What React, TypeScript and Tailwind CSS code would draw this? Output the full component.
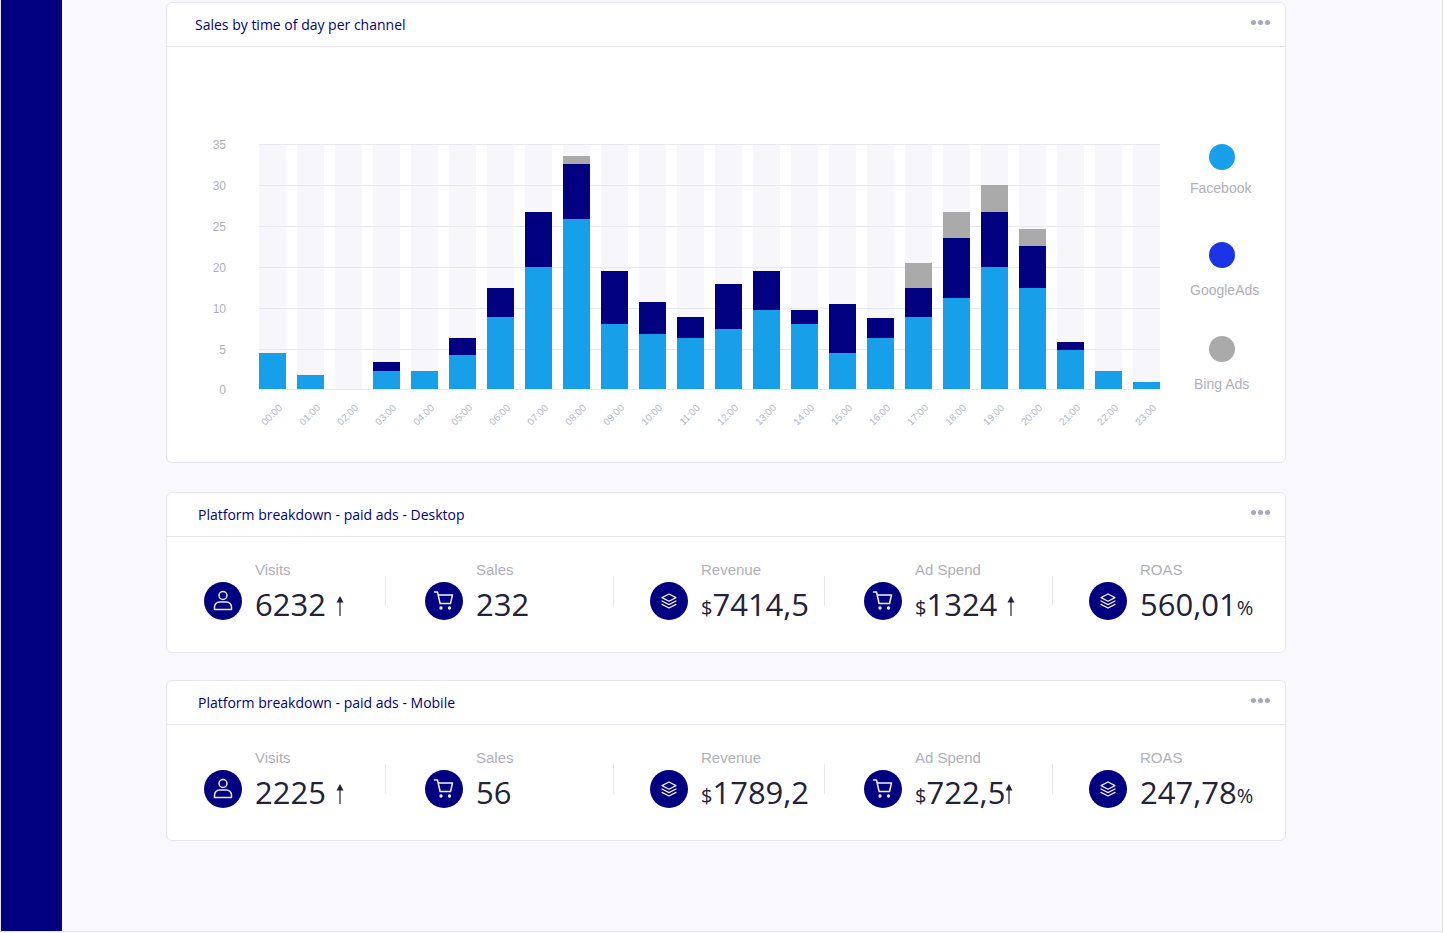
const hours = Array.from({ length: 24 }, (_, i) => `${String(i).padStart(2, "0")}:00`)

// top y of each bar segment, in page pixels (0 = no segment)
const bars = [
    [353, 0, 0], [375, 0, 0], [0, 0, 0], [371, 362, 0], [371, 0, 0], [355, 338, 0],
    [317, 288, 0], [267, 212, 0], [219, 164, 156], [324, 271, 0], [334, 302, 0], [338, 317, 0],
    [329, 284, 0], [310, 271, 0], [324, 310, 0], [353, 304, 0], [338, 318, 0], [317, 288, 263],
    [298, 238, 212], [267, 212, 185], [288, 246, 229], [350, 342, 0], [371, 0, 0], [382, 0, 0],
]

const yTicks = [
    { y: 144, label: "35" },
    { y: 185, label: "30" },
    { y: 226, label: "25" },
    { y: 267, label: "20" },
    { y: 308, label: "10" },
    { y: 349, label: "5" },
    { y: 389, label: "0" },
]

function Dots() {
    return (
        <div className="flex gap-[2px]">
            <span className="h-[5px] w-[5px] rounded-full bg-[#a6a6c0]" />
            <span className="h-[5px] w-[5px] rounded-full bg-[#a6a6c0]" />
            <span className="h-[5px] w-[5px] rounded-full bg-[#a6a6c0]" />
        </div>
    )
}

function CardHeader({ title, pad }: { title: string; pad: string }) {
    return (
        <div className={`flex h-[44px] items-center justify-between border-b border-[#e6e6f2] pr-[15px] ${pad}`}>
            <span className="font-['Open_Sans',sans-serif] text-[14px] text-[#000080]">{title}</span>
            <div className="-mt-[5px]">
                <Dots />
            </div>
        </div>
    )
}

function UserIcon() {
    return (
        <svg width="20" height="24" viewBox="0 0 20 24" fill="none" stroke="#e8e8f8" strokeWidth="1.5">
            <circle cx="10" cy="6.5" r="4" />
            <path d="M1.5 20.5v-2.5a5 5 0 0 1 5-5h7a5 5 0 0 1 5 5v2.5z" strokeLinejoin="round" />
        </svg>
    )
}

function CartIcon() {
    return (
        <svg width="22" height="22" viewBox="0 0 22 22" fill="none" stroke="#f2f2fc" strokeWidth="1.5" strokeLinecap="round" strokeLinejoin="round">
            <path d="M1.5 2h3l2.6 11.5h10.4l2-8.5H5.2" />
            <circle cx="8" cy="18" r="0.9" fill="#f2f2fc" />
            <circle cx="16.5" cy="18" r="0.9" fill="#f2f2fc" />
        </svg>
    )
}

function LayersIcon() {
    return (
        <svg width="18" height="18" viewBox="0 0 18 18" fill="none" stroke="#f2f2fc" strokeWidth="1.2" strokeLinejoin="round" strokeLinecap="round">
            <path d="M9 2l7 3.6-7 3.6-7-3.6z" />
            <path d="M2 9l7 3.6L16 9" />
            <path d="M2 12.4L9 16l7-3.6" />
        </svg>
    )
}

function UpArrow() {
    return (
        <svg width="8" height="20" viewBox="0 0 8 20" className="mb-[10px]">
            <path d="M4 6v14" stroke="#22223a" strokeWidth="1.2" />
            <path d="M4 0l3.5 6.5h-7z" fill="#22223a" />
        </svg>
    )
}

type StatProps = {
    label: string
    value: string
    icon: "user" | "cart" | "layers"
    prefix?: boolean
    suffix?: boolean
    arrow?: boolean
    width: string
    pad: string
    arrowGap?: string
}

function Stat({ label, value, icon, prefix, suffix, arrow, width, pad, arrowGap = "ml-[10px]" }: StatProps) {
    return (
        <div className={`relative flex h-[116px] shrink-0 pt-[45px] ${width} ${pad}`}>
            <div className="mt-0 flex h-[38px] w-[38px] shrink-0 items-center justify-center rounded-full bg-[#000080]">
                {icon === "user" && <UserIcon />}
                {icon === "cart" && <CartIcon />}
                {icon === "layers" && <LayersIcon />}
            </div>
            <div className="-mt-[21px] ml-[13px]">
                <div className="h-[18px] font-['Liberation_Sans',sans-serif] text-[15px] leading-[18px] text-[#b0b0b8]">{label}</div>
                <div className="mt-[3px] flex h-[44px] items-end whitespace-nowrap font-['Open_Sans',sans-serif] text-[#22223a]">
                    {prefix && <span className="text-[20px] leading-[36px]">$</span>}
                    <span className="text-[31px] leading-[44px]">{value}</span>
                    {suffix && <span className="text-[20px] leading-[36px]">%</span>}
                    {arrow && <span className={arrowGap}><UpArrow /></span>}
                </div>
            </div>
        </div>
    )
}

function Divider() {
    return <div className="mt-[39px] h-[30px] w-px shrink-0 bg-[#e8e8ee]" />
}

function StatRow({ items }: { items: Omit<StatProps, "width" | "pad">[] }) {
    const widths = ["w-[218px]", "w-[227px]", "w-[210px]", "w-[227px]", "w-[233px]"]
    const pads = ["pl-[37px]", "pl-[39px]", "pl-[36px]", "pl-[39px]", "pl-[36px]"]
    return (
        <div className="flex">
            {items.map((item, i) => (
                <div key={item.label} className="flex">
                    <Stat {...item} width={widths[i]} pad={pads[i]} />
                    {i < 4 && <Divider />}
                </div>
            ))}
        </div>
    )
}

function Chart() {
    return (
        <svg width="1000" height="415" viewBox="167 47 1000 415" className="shrink-0">
            {bars.map((_, i) => (
                <rect key={i} x={259 + i * 38} y={144} width={27} height={245} fill="#f7f7fb" />
            ))}
            {yTicks.map((t) => (
                <g key={t.label}>
                    <line x1={259} x2={1160} y1={t.y + 0.5} y2={t.y + 0.5} stroke="#e8e8f0" />
                    <text x={226} y={t.y + 4.5} textAnchor="end" fontSize="12" fontFamily="Liberation Sans" fill="#b0b0b8">{t.label}</text>
                </g>
            ))}
            {bars.map(([blue, navy, gray], i) => {
                const x = 259 + i * 38
                return (
                    <g key={i}>
                        {gray > 0 && <rect x={x} y={gray} width={27} height={(navy || 389) - gray} fill="#aaaaaa" />}
                        {navy > 0 && <rect x={x} y={navy} width={27} height={blue - navy} fill="#000080" />}
                        {blue > 0 && <rect x={x} y={blue} width={27} height={389 - blue} fill="#179fe9" />}
                    </g>
                )
            })}
            {hours.map((h, i) => (
                <text
                    key={h}
                    x={272 + i * 38}
                    y={418}
                    textAnchor="middle"
                    fontSize="10"
                    fontFamily="Liberation Sans"
                    fill="#b8b8c0"
                    transform={`rotate(-45 ${272 + i * 38} 415)`}
                >
                    {h}
                </text>
            ))}
        </svg>
    )
}

function Legend() {
    return (
        <div className="flex flex-col pt-[97px] font-['Liberation_Sans',sans-serif] text-[14px] leading-[18px] text-[#b0b0b8]">
            <div className="ml-[42px] h-[26px] w-[26px] rounded-full bg-[#179fe9]" />
            <div className="ml-[23px] mt-[9px]">Facebook</div>
            <div className="ml-[42px] mt-[45px] h-[26px] w-[26px] rounded-full bg-[#1b34e8]" />
            <div className="ml-[23px] mt-[13px]">GoogleAds</div>
            <div className="ml-[42px] mt-[37px] h-[26px] w-[26px] rounded-full bg-[#aaaaaa]" />
            <div className="ml-[27px] mt-[13px]">Bing Ads</div>
        </div>
    )
}

const desktop: Omit<StatProps, "width" | "pad">[] = [
    { label: "Visits", value: "6232", icon: "user", arrow: true },
    { label: "Sales", value: "232", icon: "cart" },
    { label: "Revenue", value: "7414,5", icon: "layers", prefix: true },
    { label: "Ad Spend", value: "1324", icon: "cart", prefix: true, arrow: true },
    { label: "ROAS", value: "560,01", icon: "layers", suffix: true },
]

const mobile: Omit<StatProps, "width" | "pad">[] = [
    { label: "Visits", value: "2225", icon: "user", arrow: true },
    { label: "Sales", value: "56", icon: "cart" },
    { label: "Revenue", value: "1789,2", icon: "layers", prefix: true },
    { label: "Ad Spend", value: "722,5", icon: "cart", prefix: true, arrow: true, arrowGap: "ml-0" },
    { label: "ROAS", value: "247,78", icon: "layers", suffix: true },
]

export default function App() {
    return (
        <div className="h-[933px] w-[1444px] overflow-hidden bg-white">
            <div className="flex h-[932px] w-[1443px] border-x border-b border-[#e2e2e2] bg-[#f8f8fd]">
                <aside className="w-[61px] shrink-0 bg-[#000080]" />
                <main className="ml-[104px] w-[1120px] pt-[2px]">
                    <section className="h-[461px] rounded-[6px] border border-[#e6e6f2] bg-white">
                        <CardHeader title="Sales by time of day per channel" pad="pl-[28px]" />
                        <div className="flex">
                            <Chart />
                            <Legend />
                        </div>
                    </section>
                    <section className="mt-[29px] h-[161px] rounded-[6px] border border-[#e6e6f2] bg-white">
                        <CardHeader title="Platform breakdown - paid ads - Desktop" pad="pl-[31px]" />
                        <StatRow items={desktop} />
                    </section>
                    <section className="mt-[27px] h-[161px] rounded-[6px] border border-[#e6e6f2] bg-white">
                        <CardHeader title="Platform breakdown - paid ads - Mobile" pad="pl-[31px]" />
                        <StatRow items={mobile} />
                    </section>
                </main>
            </div>
        </div>
    )
}
